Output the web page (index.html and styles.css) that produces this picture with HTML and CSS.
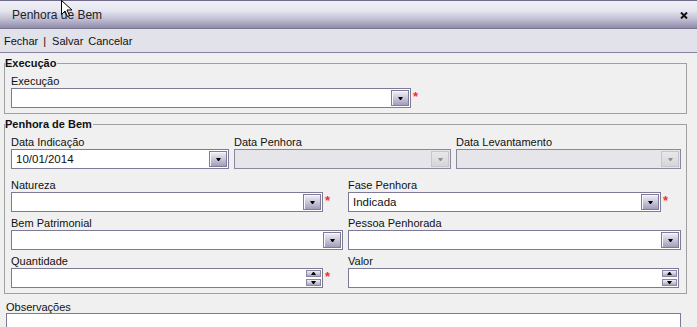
FILE: index.html
```html
<!DOCTYPE html>
<html lang="pt-BR">
<head>
  <meta charset="UTF-8">
  <title>Penhora de Bem</title>
  <link rel="stylesheet" href="styles.css">
</head>
<body>

<div class="janela">
  <div class="titulo">
    <span>Penhora de Bem</span>
    <svg class="fechar" width="8" height="7" viewBox="0 0 8 7"><path d="M1 0.5 L7 6.5 M7 0.5 L1 6.5" stroke="#111" stroke-width="2"/></svg>
  </div>

  <div class="toolbar">
    <a>Fechar</a><span class="sep">|</span><a>Salvar</a><a>Cancelar</a>
  </div>

  <div class="conteudo">
    <fieldset class="grupo">
      <legend>Execução</legend>
      <div class="campo exec">
        <label>Execução</label>
        <div class="linha">
          <div class="caixa combo"><span class="valor"></span><span class="btn"><i class="seta"></i></span></div>
          <span class="req">*</span>
        </div>
      </div>
    </fieldset>

    <fieldset class="grupo grupo2">
      <legend>Penhora de Bem</legend>
      <div class="linha3">
        <div class="campo">
          <label>Data Indicação</label>
          <div class="caixa combo"><span class="valor">10/01/2014</span><span class="btn"><i class="seta"></i></span></div>
        </div>
        <div class="campo">
          <label>Data Penhora</label>
          <div class="caixa combo desab"><span class="valor"></span><span class="btn"><i class="seta"></i></span></div>
        </div>
        <div class="campo">
          <label>Data Levantamento</label>
          <div class="caixa combo desab"><span class="valor"></span><span class="btn"><i class="seta"></i></span></div>
        </div>
      </div>

      <div class="linha2">
        <div class="campo">
          <label>Natureza</label>
          <div class="linha">
            <div class="caixa combo"><span class="valor"></span><span class="btn"><i class="seta"></i></span></div>
            <span class="req">*</span>
          </div>
        </div>
        <div class="campo">
          <label>Fase Penhora</label>
          <div class="linha">
            <div class="caixa combo"><span class="valor">Indicada</span><span class="btn"><i class="seta"></i></span></div>
            <span class="req">*</span>
          </div>
        </div>

        <div class="campo">
          <label>Bem Patrimonial</label>
          <div class="caixa combo"><span class="valor"></span><span class="btn"><i class="seta"></i></span></div>
        </div>
        <div class="campo">
          <label>Pessoa Penhorada</label>
          <div class="caixa combo"><span class="valor"></span><span class="btn"><i class="seta"></i></span></div>
        </div>

        <div class="campo">
          <label>Quantidade</label>
          <div class="linha">
            <div class="caixa combo"><span class="valor"></span><span class="spin"><span class="btn-spin"><i class="seta cima"></i></span><span class="btn-spin"><i class="seta"></i></span></span></div>
            <span class="req">*</span>
          </div>
        </div>
        <div class="campo valor-campo">
          <label>Valor</label>
          <div class="caixa combo"><span class="valor"></span><span class="spin"><span class="btn-spin"><i class="seta cima"></i></span><span class="btn-spin"><i class="seta"></i></span></span></div>
        </div>
      </div>
    </fieldset>

    <div class="obs">
      <label>Observações</label>
      <div class="texto"></div>
    </div>
  </div>
</div>

<svg class="cursor" width="13" height="18" viewBox="0 0 13 18"><path d="M0.5 0.5 L0.5 14.5 L4 11 L6.5 16.5 L8.5 15.5 L6 10 L11 10 Z" fill="#fff" stroke="#000" stroke-width="1"/></svg>

</body>
</html>
```

FILE: styles.css
```css
body {
  margin: 0;
  background-color: #f0f0f0;
  font-family: "Liberation Sans", Arial, sans-serif;
  font-size: 11px;
  color: #111;
}

.janela {
  width: 697px;
  height: 327px;
  overflow: hidden;
}

.titulo {
  height: 27px;
  display: flex;
  align-items: center;
  justify-content: space-between;
  padding: 0 9px 0 12px;
  border-top: 1px solid #6e6a88;
  border-bottom: 1px solid #7a7694;
  background: linear-gradient(#f0f0f8 0%, #e6e6f0 35%, #c4c2d6 65%, #8e8aa8 100%);
  font-size: 12px;
  color: #222;
}

.fechar {
  margin-top: 1px;
}

.toolbar {
  height: 23px;
  display: flex;
  align-items: center;
  padding-left: 4px;
  background-color: #e2e2ea;
  border-bottom: 1px solid #85819f;
  font-size: 11px;
}

.toolbar a {
  margin-right: 5px;
  cursor: pointer;
}

.toolbar .sep {
  margin-right: 6px;
}

.conteudo {
  padding: 3px 10px 0 4px;
}

.grupo {
  margin: 0;
  padding: 0 5px 5px 6px;
  border: 1px solid #a0a0a0;
}

.grupo legend {
  padding: 0 1px 0 0;
  margin-left: -6px;
  font-weight: bold;
  line-height: 14px;
}

.grupo2 {
  margin-top: 3px;
}

.campo label {
  display: block;
  height: 18px;
  padding-top: 5px;
  line-height: 13px;
  box-sizing: border-box;
}

.linha {
  display: flex;
  align-items: center;
}

.exec .caixa {
  width: 400px;
  flex: none;
}

.req {
  width: 18px;
  padding-left: 2px;
  color: #f0302a;
  font-weight: bold;
  font-size: 13px;
  line-height: 20px;
  align-self: flex-start;
  margin-top: -1px;
}

.caixa {
  flex: 1;
  height: 20px;
  box-sizing: border-box;
  border: 1px solid #7c7a96;
  background-color: #fff;
}

.combo {
  display: flex;
  align-items: center;
  padding: 0 1px 0 4px;
}

.combo .valor {
  flex: 1;
  line-height: 18px;
  font-size: 11.5px;
}

.btn {
  width: 18px;
  height: 16px;
  box-sizing: border-box;
  display: flex;
  align-items: center;
  justify-content: center;
  border: 1px solid #7e7a98;
  box-shadow: inset 1px 1px 0 #f8f8fc;
  background: linear-gradient(#f0f0f6, #a29ebb);
}

.seta {
  width: 1px;
  height: 0;
  border-left: 2px solid transparent;
  border-right: 2px solid transparent;
  border-top: 3px solid #000;
}

.seta.cima {
  border-top: none;
  border-bottom: 3px solid #000;
}

.desab {
  background-color: #e6e6ea;
  border-color: #8a889e;
}

.desab .btn {
  border-color: #c6c6ca;
  box-shadow: none;
  background: linear-gradient(#e8e8ea, #d6d6da);
}

.desab .seta {
  border-top-color: #909090;
}

.spin {
  display: flex;
  flex-direction: column;
  gap: 2px;
}

.btn-spin {
  width: 15px;
  height: 7px;
  box-sizing: border-box;
  display: flex;
  align-items: center;
  justify-content: center;
  border: 1px solid #8a86a2;
  background: linear-gradient(#f0f0f6, #aaa6c2);
}

.linha3 {
  display: grid;
  grid-template-columns: 218px 217px 1fr;
  gap: 5px;
}

.linha2 {
  display: grid;
  grid-template-columns: 332px 1fr;
  column-gap: 5px;
  margin-top: 5px;
}

.valor-campo .caixa {
  margin-right: 2px;
}

.obs {
  padding-left: 2px;
  margin-top: 8px;
}

.obs label {
  display: block;
  line-height: 11px;
}

.texto {
  width: 675px;
  height: 40px;
  margin-top: 0;
  box-sizing: border-box;
  border: 1px solid #7c7a96;
  background-color: #fff;
}

.cursor {
  position: absolute;
  left: 61px;
  top: 0;
}
```
